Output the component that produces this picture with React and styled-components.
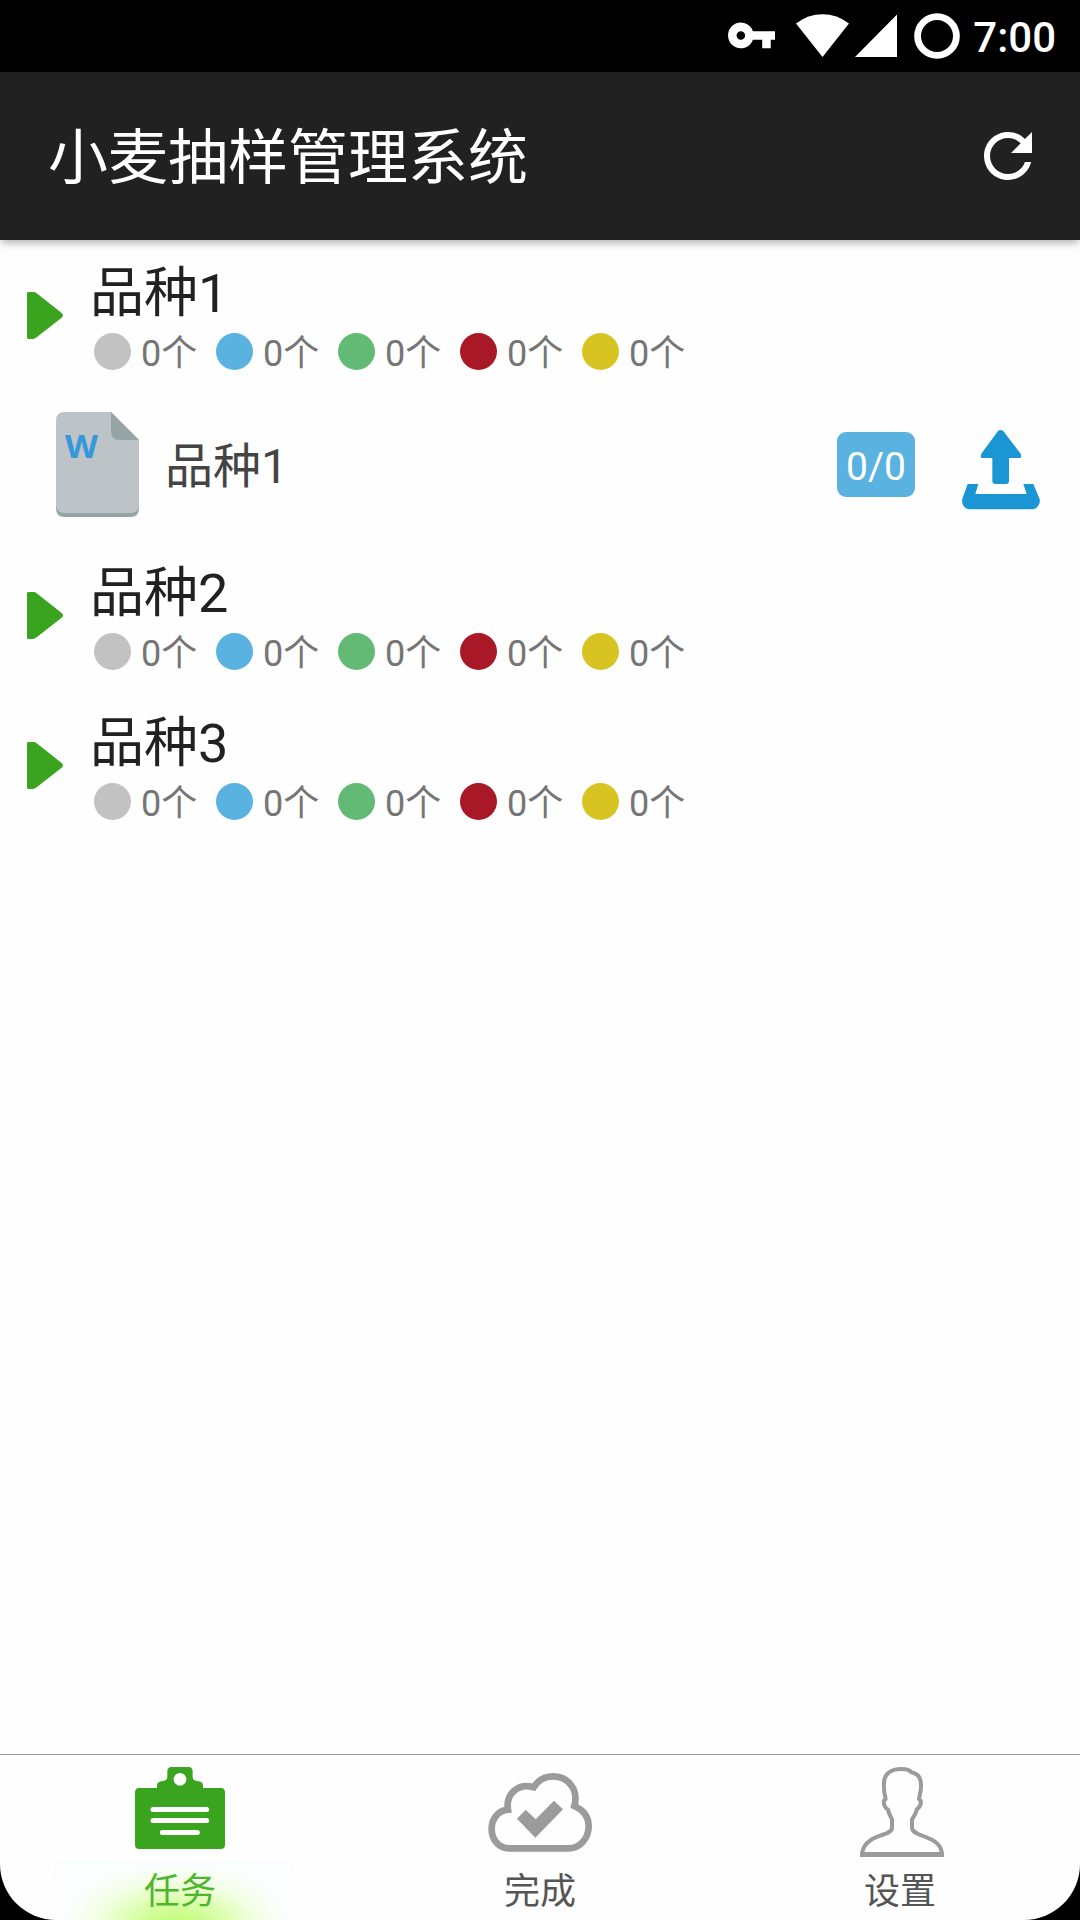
import React from "react";
import styled, { createGlobalStyle } from "styled-components";

const GlobalStyle = createGlobalStyle`
  * { box-sizing: border-box; }
  body {
    margin: 0;
    background: #000;
    font-family: Roboto, "Noto Sans CJK SC", sans-serif;
  }
  svg { display: block; flex: none; }
`;

const Screen = styled.div`
  display: flex;
  flex-direction: column;
  width: 1080px;
  height: 1920px;
  background: #fefefe;
  border-radius: 0 0 56px 56px;
  overflow: hidden;
`;

const StatusBar = styled.div`
  display: flex;
  align-items: center;
  flex: none;
  height: 72px;
  padding-right: 24px;
  justify-content: flex-end;
  background: #000;
  color: #fff;
`;

const Clock = styled.span`
  margin: 3px 0 0 10px;
  font-size: 42px;
  font-weight: 500;
  line-height: 50px;
`;

const AppBar = styled.header`
  display: flex;
  align-items: center;
  justify-content: space-between;
  flex: none;
  height: 168px;
  padding: 0 36px 0 48px;
  background: #212121;
  color: #fff;
  box-shadow: 0 4px 8px -1px rgba(0, 0, 0, 0.3);
`;

const Title = styled.h1`
  margin: 5px 0 0;
  font-size: 60px;
  font-weight: 400;
  line-height: 72px;
`;

const List = styled.main`
  flex: 1;
`;

const Group = styled.section`
  display: flex;
  height: 150px;
  padding: 22px 0 0 27px;
`;

const ArrowSlot = styled.div`
  width: 63px;
  padding-top: 29px;
`;

const GroupName = styled.h2`
  margin: 0 0 8px;
  font-size: 54px;
  font-weight: 400;
  line-height: 63px;
  color: #212121;
`;

const Counts = styled.div`
  display: flex;
  padding-left: 4px;
`;

const Count = styled.div`
  display: flex;
  width: 122px;
  gap: 10px;
  font-size: 36px;
  line-height: 42px;
  color: #757575;
`;

const Dot = styled.i`
  width: 37px;
  height: 37px;
  border-radius: 50%;
  background: ${(p) => p.$color};
`;

const Item = styled.div`
  display: flex;
  align-items: center;
  height: 150px;
  padding: 0 40px 1px 56px;
`;

const ItemName = styled.span`
  flex: 1;
  margin: 5px 0 0 26px;
  font-size: 48px;
  line-height: 56px;
  color: #444;
`;

const Badge = styled.span`
  width: 78px;
  height: 65px;
  margin-right: 47px;
  border-radius: 9px;
  background: #59b2e0;
  color: #fff;
  font-size: 39px;
  line-height: 70px;
  text-align: center;
`;

const UploadSlot = styled.div`
  padding-top: 11px;
`;

const TabBar = styled.nav`
  display: flex;
  flex: none;
  height: 166px;
  border-top: 1px solid #999;
`;

const Tab = styled.div`
  display: flex;
  flex-direction: column;
  align-items: center;
  flex: 1;
  padding-top: 9px;
  font-size: 36px;
  line-height: 42px;
  color: ${(p) => (p.$active ? "#4fb52c" : "#555")};
`;

const TabLabel = styled.div`
  width: 240px;
  height: 60px;
  margin-right: ${(p) => (p.$active ? "12px" : "0")};
  padding: 11px 0 0 ${(p) => (p.$active ? "12px" : "0")};
  text-align: center;
  background: ${(p) =>
    p.$active
      ? "radial-gradient(ellipse 116px 64px at 51% 112%, #bdfb70 0%, #cbfd8c 22%, rgba(216,255,165,.85) 45%, rgba(236,255,210,.55) 72%, rgba(254,254,254,0) 100%), linear-gradient(#fafdff, #fefefe)"
      : "none"};
`;

const statusColors = ["#c2c2c2", "#59b2e0", "#63ba74", "#a81826", "#d7c422"];

const StatusIcons = () => (
  <svg width="240" height="72" viewBox="723 0 240 72" fill="#fff">
    <g transform="translate(725.9 9.8) scale(2.135)">
      <path d="M12.65 10C11.83 7.67 9.61 6 7 6c-3.31 0-6 2.69-6 6s2.69 6 6 6c2.61 0 4.83-1.67 5.65-4H17v4h4v-4h2v-4H12.65zM7 14c-1.1 0-2-.9-2-2s.9-2 2-2 2 .9 2 2-.9 2-2 2z" />
    </g>
    <path d="M796 23.5Q808 14.3 822.5 14.3T849 23.5L822.5 57Z" />
    <path d="M855 57L897 14.5V57Z" />
    <circle cx="937" cy="36" r="19.4" fill="none" stroke="#fff" strokeWidth="6.8" />
  </svg>
);

const RefreshIcon = () => (
  <svg width="72" height="72" viewBox="0 0 24 24" fill="#fff">
    <path d="M17.65 6.35C16.2 4.9 14.21 4 12 4c-4.42 0-7.99 3.58-7.99 8s3.57 8 7.99 8c3.73 0 6.84-2.55 7.73-6h-2.08c-.82 2.33-3.04 4-5.65 4-3.31 0-6-2.69-6-6s2.69-6 6-6c1.66 0 3.14.69 4.22 1.78L13 11h7V4l-2.35 2.35z" />
  </svg>
);

const ArrowIcon = () => (
  <svg width="37" height="48" viewBox="81 153 111 144">
    <path
      d="M81 160Q81 156 86 156H101Q106 156 110 160L185 219Q193 226 185 233L110 292Q104 297 98 297H86Q81 297 81 293Z"
      fill="#3ba41f"
    />
  </svg>
);

const DocIcon = () => (
  <svg width="83" height="105" viewBox="168 516 249 315">
    <path d="M168 700H417V805Q417 831 391 831H194Q168 831 168 805Z" fill="#95a5a5" />
    <path d="M194 516H333L417 600V793Q417 819 391 819H194Q168 819 168 793V542Q168 516 194 516Z" fill="#bdc3c7" />
    <path d="M333 516L417 600H359Q333 600 333 574Z" fill="#95a5a5" />
    <text
      x="195"
      y="655"
      fontFamily="Open Sans, sans-serif"
      fontWeight="700"
      fontSize="98"
      textLength="99"
      lengthAdjust="spacingAndGlyphs"
      fill="#3498db"
    >
      W
    </text>
  </svg>
);

const UploadIcon = () => (
  <svg width="78" height="80" viewBox="486 90 234 240" fill="#1b96d5">
    <path d="M594 93Q602 87 610 93L661 160Q665 166 662 174H627V243Q627 252 618 252H586Q577 252 577 243V174H543Q541 166 545 160Z" />
    <path d="M503 252H535L526 282H680L670 252H700L718 295Q722 305 716 315Q708 328 697 328H509Q497 328 489 315Q484 305 488 293Z" />
  </svg>
);

const ClipboardIcon = () => (
  <svg width="104" height="96" viewBox="384 72 312 288">
    <path
      d="M405 157Q405 144 418 144H471V137Q471 124 488 123Q501 122 502 112V94Q502 81 515 81H565Q578 81 578 94V112Q579 122 592 123Q609 124 609 137V144H662Q675 144 675 157V314Q675 327 662 327H418Q405 327 405 314Z"
      fill="#3ba41f"
    />
    <circle cx="540" cy="118" r="19" fill="#fefefe" />
    <path d="M459 208.500H620M459 241.500H620M487 277.500H592" stroke="#fefefe" strokeWidth="15" strokeLinecap="round" />
  </svg>
);

const CloudIcon = () => (
  <svg width="104" height="96" viewBox="144 72 312 288">
    <path
      d="M207 325H385C419 325 446 296 446 259C446 232 431 210 403 198C417 148 383 109 340 109C313 109 293 122 281 142C237 128 196 160 204 209C174 212 155 237 155 267C155 300 177 325 207 325Z"
      fill="none"
      stroke="#9b9b9b"
      strokeWidth="20"
    />
    <path d="M231 236L257 209L287 238L342 182L369 208L286 293Z" fill="#9b9b9b" />
  </svg>
);

const PersonIcon = () => (
  <svg width="104" height="96" viewBox="144 72 312 288" fill="none" stroke="#9b9b9b" strokeLinejoin="round">
    <path
      strokeWidth="12"
      d="M187 339C189 315 209 298 240 287C260 280 276 276 276 263V238C270 228 266 220 264 209C254 203 250 190 252 182L257 177C252 158 251 144 252 130C252 102 273 87 304 87C318 87 329 90 334 97C354 101 363 116 363 135C364 151 359 163 357 177L362 182C364 192 358 203 350 209C348 220 343 228 336 238V263C336 276 352 281 372 289C405 300 424 315 425 339"
    />
    <path d="M180 343.500H432" strokeWidth="15" />
  </svg>
);

const GroupRow = ({ name }) => (
  <Group>
    <ArrowSlot>
      <ArrowIcon />
    </ArrowSlot>
    <div>
      <GroupName>{name}</GroupName>
      <Counts>
        {statusColors.map((color) => (
          <Count key={color}>
            <Dot $color={color} />
            <span>0个</span>
          </Count>
        ))}
      </Counts>
    </div>
  </Group>
);

const tabs = [
  { label: "任务", Icon: ClipboardIcon, active: true },
  { label: "完成", Icon: CloudIcon },
  { label: "设置", Icon: PersonIcon },
];

export default function App() {
  return (
    <>
      <GlobalStyle />
      <Screen>
        <StatusBar>
          <StatusIcons />
          <Clock>7:00</Clock>
        </StatusBar>
        <AppBar>
          <Title>小麦抽样管理系统</Title>
          <RefreshIcon />
        </AppBar>
        <List>
          <GroupRow name="品种1" />
          <Item>
            <DocIcon />
            <ItemName>品种1</ItemName>
            <Badge>0/0</Badge>
            <UploadSlot>
              <UploadIcon />
            </UploadSlot>
          </Item>
          <GroupRow name="品种2" />
          <GroupRow name="品种3" />
        </List>
        <TabBar>
          {tabs.map(({ label, Icon, active }) => (
            <Tab key={label} $active={active}>
              <Icon />
              <TabLabel $active={active}>{label}</TabLabel>
            </Tab>
          ))}
        </TabBar>
      </Screen>
    </>
  );
}
